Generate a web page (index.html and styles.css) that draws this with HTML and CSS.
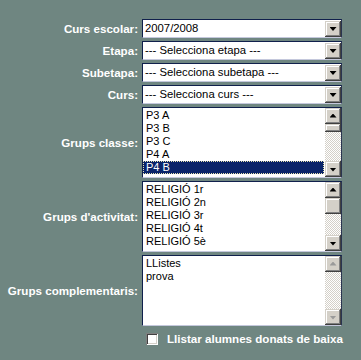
FILE: index.html
```html
<!DOCTYPE html>
<html>
<head>
<meta charset="utf-8">
<link rel="stylesheet" href="styles.css">
</head>
<body>
<div class="form">
  <div class="lbl">Curs escolar:</div>
  <div class="select"><span class="val">2007/2008</span><span class="btn"><i class="down"></i></span></div>

  <div class="lbl">Etapa:</div>
  <div class="select"><span class="val">--- Selecciona etapa ---</span><span class="btn"><i class="down"></i></span></div>

  <div class="lbl">Subetapa:</div>
  <div class="select"><span class="val">--- Selecciona subetapa ---</span><span class="btn"><i class="down"></i></span></div>

  <div class="lbl">Curs:</div>
  <div class="select"><span class="val">--- Selecciona curs ---</span><span class="btn"><i class="down"></i></span></div>

  <div class="lbl">Grups classe:</div>
  <div class="listbox">
    <div class="items">
      <div class="item">P3 A</div>
      <div class="item">P3 B</div>
      <div class="item">P3 C</div>
      <div class="item">P4 A</div>
      <div class="item sel">P4 B</div>
    </div>
    <div class="scroll">
      <span class="btn"><i class="up"></i></span>
      <div class="track"><span class="thumb t1"></span></div>
      <span class="btn"><i class="down"></i></span>
    </div>
  </div>

  <div class="lbl">Grups d'activitat:</div>
  <div class="listbox">
    <div class="items">
      <div class="item">RELIGIÓ 1r</div>
      <div class="item">RELIGIÓ 2n</div>
      <div class="item">RELIGIÓ 3r</div>
      <div class="item">RELIGIÓ 4t</div>
      <div class="item">RELIGIÓ 5è</div>
    </div>
    <div class="scroll">
      <span class="btn"><i class="up"></i></span>
      <div class="track"><span class="thumb t2"></span></div>
      <span class="btn"><i class="down"></i></span>
    </div>
  </div>

  <div class="lbl">Grups complementaris:</div>
  <div class="listbox">
    <div class="items">
      <div class="item">LListes</div>
      <div class="item">prova</div>
    </div>
    <div class="scroll">
      <span class="btn dis"><i class="up"></i></span>
      <div class="track"></div>
      <span class="btn dis"><i class="down"></i></span>
    </div>
  </div>

  <div class="spacer"></div>
  <div class="check"><span class="box"></span><span class="clbl">Llistar alumnes donats de baixa</span></div>
</div>
</body>
</html>
```

FILE: styles.css
```css
html, body {
  margin: 0;
  padding: 0;
  background: #6f8681;
  height: 100%;
}
body {
  font-family: "Liberation Sans", Arial, sans-serif;
}
.form {
  display: grid;
  grid-template-columns: 138px 200px;
  column-gap: 4px;
  row-gap: 3px;
  padding-top: 19px;
}
.lbl {
  justify-self: end;
  align-self: center;
  color: #fff;
  font-weight: bold;
  font-size: 11.6px;
  white-space: nowrap;
}
.select {
  box-sizing: border-box;
  height: 19px;
  display: flex;
  align-items: center;
  background: #fff;
  border: 1px solid #10204c;
  border-bottom-color: #c4c8dc;
  border-right-color: #2a3450;
}
.val {
  flex: 1;
  font-size: 11.3px;
  color: #000;
  padding-left: 2px;
  white-space: nowrap;
  line-height: 17px;
}
.btn {
  box-sizing: border-box;
  width: 16px;
  height: 16px;
  background: #d4d0c8;
  box-shadow: inset -1px -1px #404040, inset 1px 1px #d4d0c8, inset -2px -2px #808080, inset 2px 2px #fff;
  display: flex;
  align-items: center;
  justify-content: center;
  flex: none;
}
.down, .up {
  display: block;
  width: 7px;
  height: 4px;
  background: #000;
}
.down {
  clip-path: polygon(0 0, 100% 0, 50% 100%);
  margin-top: 1px;
}
.up {
  clip-path: polygon(50% 0, 100% 100%, 0 100%);
  margin-top: -1px;
}
.btn.dis .down, .btn.dis .up {
  background: #9a9a9a;
}
.listbox {
  box-sizing: border-box;
  height: 71px;
  display: flex;
  background: #fff;
  border: 1px solid #10204c;
  border-bottom-color: #c4c8dc;
  border-right-color: #2a3450;
}
.items {
  flex: 1;
  padding-top: 1px;
  overflow: hidden;
}
.item {
  font-size: 11px;
  line-height: 13px;
  height: 13px;
  padding-left: 3px;
  color: #000;
  white-space: nowrap;
}
.item.sel {
  background: #0a246a;
  color: #fff;
  outline: 1px dotted #e8e4b0;
  outline-offset: -1px;
  margin: 0 1px 0 0;
}
.scroll {
  width: 16px;
  display: flex;
  flex-direction: column;
}
.track {
  flex: 1;
  background-color: #fff;
  background-image: repeating-conic-gradient(#d4d0c8 0 25%, #fff 0 50%);
  background-size: 2px 2px;
  display: flex;
  flex-direction: column;
}
.thumb {
  display: block;
  background: #d4d0c8;
  box-shadow: inset -1px -1px #404040, inset 1px 1px #d4d0c8, inset -2px -2px #808080, inset 2px 2px #fff;
}
.thumb.t1 {
  height: 8px;
}
.thumb.t2 {
  height: 16px;
}
.spacer {
  height: 1px;
}
.check {
  display: flex;
  align-items: center;
  margin-top: 3px;
  padding-left: 4px;
}
.box {
  box-sizing: border-box;
  width: 12px;
  height: 12px;
  background: #fff;
  box-shadow: inset 1px 1px #808080, inset -1px -1px #fff, inset 2px 2px #404040, inset -2px -2px #d4d0c8;
  flex: none;
}
.clbl {
  margin-left: 9px;
  color: #fff;
  font-weight: bold;
  font-size: 11.6px;
  white-space: nowrap;
}
```
